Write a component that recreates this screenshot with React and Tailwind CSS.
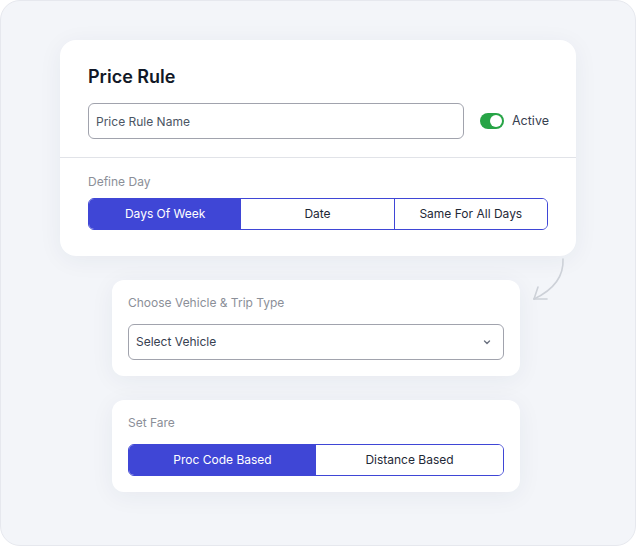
function Segmented({ options, active }) {
    return (
        <div className="flex h-8 rounded-md border border-[#3f46d6] overflow-hidden">
            {options.map((opt, i) => (
                <button
                    key={opt}
                    className={
                        i === active
                            ? "flex-1 bg-[#3f46d6] text-white text-[12px]"
                            : i > 0 && i !== active + 1
                                ? "flex-1 bg-white text-[#1f2937] text-[12px] border-l border-[#3f46d6]"
                                : "flex-1 bg-white text-[#1f2937] text-[12px]"
                    }
                >
                    {opt}
                </button>
            ))}
        </div>
    );
}

function App() {
    return (
        <div
            className="w-[636px] h-[546px] bg-white"
            style={{ fontFamily: "Inter, 'Noto Sans', sans-serif" }}
        >
            <div className="relative w-full h-full rounded-[20px] border border-[#e6e8ee] bg-[#f3f5f9] pt-[39px]">
                {/* main card */}
                <div className="ml-[59px] w-[516px] bg-white rounded-2xl shadow-[0_4px_24px_rgba(40,50,90,0.06)]">
                    <div className="px-7 pt-[25px] pb-[18px] border-b border-[#e1e3e8]">
                        <h1 className="text-lg leading-6 font-semibold text-[#111827]">Price Rule</h1>
                        <div className="mt-[14px] flex items-center">
                            <input
                                type="text"
                                placeholder="Price Rule Name"
                                className="shrink-0 w-[376px] h-9 rounded-md border border-[#a1a3ad] pl-[7px] pr-2 text-[12px] text-[#374151] placeholder:text-[#4b5563] outline-none"
                            />
                            <div className="ml-4 flex items-center">
                                <div className="w-6 h-4 rounded-full bg-[#27a446] flex items-center justify-end px-[2px]">
                                    <div className="w-3 h-3 rounded-full bg-white"></div>
                                </div>
                                <span className="ml-2 text-[12.5px] text-[#374151]">Active</span>
                            </div>
                        </div>
                    </div>
                    <div className="px-7 pt-[14px] pb-[26px]">
                        <p className="text-[12px] leading-5 text-[#8b8f98]">Define Day</p>
                        <div className="mt-[6px]">
                            <Segmented options={["Days Of Week", "Date", "Same For All Days"]} active={0} />
                        </div>
                    </div>
                </div>

                {/* arrow */}
                <svg
                    className="absolute left-[526px] top-[253px]"
                    width="44"
                    height="52"
                    viewBox="0 0 44 52"
                    fill="none"
                    stroke="#cdd1d8"
                    strokeWidth="1.6"
                    strokeLinecap="round"
                >
                    <path d="M36 5 C37 24 26 36 7 45" />
                    <path d="M7 45 L11 33" />
                    <path d="M7 45 L20 45" />
                </svg>

                {/* vehicle card */}
                <div className="mt-6 ml-[111px] w-[408px] bg-white rounded-xl shadow-[0_4px_24px_rgba(40,50,90,0.06)] px-4 pt-[13px] pb-4">
                    <p className="text-[12px] leading-5 text-[#8b8f98]">Choose Vehicle &amp; Trip Type</p>
                    <div className="mt-[11px] h-9 rounded-md border border-[#a1a3ad] pl-[7px] pr-2 flex items-center justify-between">
                        <span className="text-[12px] text-[#374151]">Select Vehicle</span>
                        <svg width="10" height="10" viewBox="0 0 10 10" fill="none" stroke="#6b7280" strokeWidth="1.4" strokeLinecap="round" strokeLinejoin="round" className="mr-[3px]">
                            <path d="M2.5 4 L5 6.5 L7.5 4" />
                        </svg>
                    </div>
                </div>

                {/* fare card */}
                <div className="mt-6 ml-[111px] w-[408px] bg-white rounded-xl shadow-[0_4px_24px_rgba(40,50,90,0.06)] px-4 pt-[13px] pb-4">
                    <p className="text-[12px] leading-5 text-[#8b8f98]">Set Fare</p>
                    <div className="mt-[11px]">
                        <Segmented options={["Proc Code Based", "Distance Based"]} active={0} />
                    </div>
                </div>
            </div>
        </div>
    );
}

export default App;
